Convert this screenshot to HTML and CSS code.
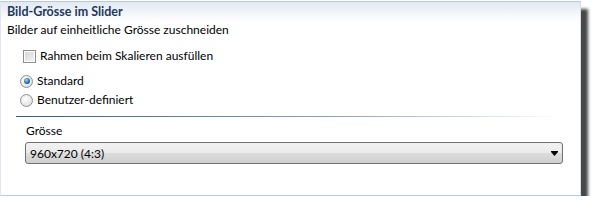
FILE: index.html
```html
<!DOCTYPE html>
<html lang="de">
<head>
    <meta charset="UTF-8">
    <title>Bild-Grösse im Slider</title>
    <link rel="stylesheet" href="styles.css">
</head>
<body>
    <div class="panel">
        <div class="head">Bild-Grösse im Slider</div>
        <div class="content">
            <div class="desc">Bilder auf einheitliche Grösse zuschneiden</div>
            <div class="check"><span class="box"></span>Rahmen beim Skalieren ausfüllen</div>
            <div class="radio first"><span class="dot on"></span>Standard</div>
            <div class="radio"><span class="dot"></span>Benutzer-definiert</div>
            <div class="sep"></div>
            <div class="field">
                <div class="lbl">Grösse</div>
                <div class="select">
                    <span>960x720 (4:3)</span>
                    <svg class="arrow" width="7" height="5" viewBox="0 0 7 5"><path d="M0 0h7v1H0z M0 1h7L3.5 5z" fill="#000"/></svg>
                </div>
            </div>
        </div>
    </div>
</body>
</html>
```

FILE: styles.css
```css
body{
    margin: 0;
    background: #fff;
    font-family: Lato, "Liberation Sans", Arial, sans-serif;
    font-size: 12px;
    color: #000;
}
.panel{
    margin-top: 1px;
    width: 579px;
    height: 193px;
    background: #fff;
    border: 1px solid #b9c9dc;
    border-left-color: #dfe6ef;
    border-right-color: #d5dde8;
    box-shadow: 7px 8px 3px rgba(0,0,0,0.72);
}
.head{
    height: 20px;
    line-height: 20px;
    padding-left: 6px;
    font-weight: bold;
    font-size: 12.5px;
    color: #1e395b;
    background: linear-gradient(#e2e9f3, #fff);
}
.content{
    display: flex;
    flex-direction: column;
}
.desc{
    line-height: 16px;
    padding-left: 6px;
}
.check, .radio{
    display: flex;
    align-items: center;
    height: 16px;
    line-height: 16px;
}
.check{
    margin-top: 10px;
    padding-left: 22px;
    gap: 4px;
}
.box{
    width: 11px;
    height: 11px;
    border: 1px solid #8e8f8f;
    background: linear-gradient(135deg, #d6d6d6, #f4f4f4);
    box-shadow: inset 0 0 0 1px #fff;
}
.radio{
    padding-left: 19px;
    gap: 4px;
    margin-top: 3px;
}
.radio.first{
    margin-top: 9px;
}
.dot{
    width: 11px;
    height: 11px;
    border-radius: 50%;
    border: 1px solid #8e8f8f;
    background: radial-gradient(circle at 40% 35%, #fff, #d8d8d8);
    position: relative;
}
.dot.on::after{
    content: "";
    position: absolute;
    left: 2.5px;
    top: 2.5px;
    width: 6px;
    height: 6px;
    border-radius: 50%;
    background: radial-gradient(circle at 40% 35%, #9fd6f5, #1b6aa8 60%, #0e3f72);
}
.sep{
    margin: 8px 19px 0 15px;
    height: 1px;
    background: linear-gradient(to right, #3a5a85, #8fa6c2 60%, rgba(200,210,225,0));
}
.field{
    padding: 6px 17px 0 24px;
}
.lbl{
    line-height: 16px;
    padding-left: 1px;
}
.select{
    margin-top: 3px;
    height: 20px;
    border: 1px solid #707070;
    border-radius: 3px;
    background: linear-gradient(#f2f2f2, #ebebeb 50%, #dddddd 50%, #cfcfcf);
    display: flex;
    align-items: center;
    justify-content: space-between;
    padding: 0 4px 0 4px;
}
```
